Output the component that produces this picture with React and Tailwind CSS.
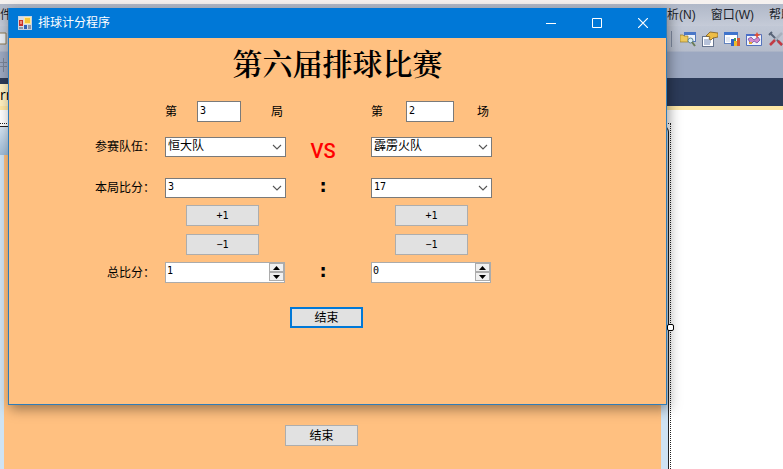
import { useState } from "react";

function Chevron() {
  return (
    <svg className="pointer-events-none absolute right-1 top-1.5 h-2 w-2.5" viewBox="0 0 10 8" fill="none" stroke="#555" strokeWidth="1.1">
      <path d="M1 2l4 4 4-4" />
    </svg>
  );
}

function Combo({ label, options, numeric }) {
  return (
    <div className="relative w-[121px]">
      <select
        aria-label={label}
        className={`block h-5 w-full appearance-none border border-[#7a7a7a] bg-white px-0.5 pb-0.5 leading-4 outline-none ${numeric ? "font-['DejaVu_Sans_Mono',monospace] text-[10px]" : "text-xs"}`}
      >
        {options.map((o) => (
          <option key={o}>{o}</option>
        ))}
      </select>
      <Chevron />
    </div>
  );
}

function SmallBox({ label, value, width }) {
  return (
    <input
      aria-label={label}
      defaultValue={value}
      className={`${width} h-[21px] border border-[#7a7a7a] bg-white px-0.5 pb-0.5 font-['DejaVu_Sans_Mono',monospace] text-[10px] outline-none`}
    />
  );
}

function Button({ children, focused, numeric, onClick }) {
  return (
    <button
      type="button"
      onClick={onClick}
      className={`h-[21px] w-[73px] bg-[#e1e1e1] leading-4 ${focused ? "border-2 border-[#0078d7]" : "border border-[#adadad]"} ${numeric ? "font-['DejaVu_Sans_Mono',monospace] text-[10px]" : "text-xs"}`}
    >
      {children}
    </button>
  );
}

function Arrow({ label, d, onClick }) {
  return (
    <button type="button" aria-label={label} onClick={onClick} className="flex flex-1 items-center justify-center border border-[#acacac] bg-[#f0f0f0]">
      <svg className="h-1 w-[7px]" viewBox="0 0 7 4">
        <path d={d} fill="#000" />
      </svg>
    </button>
  );
}

function Spinner({ label, initial }) {
  const [value, setValue] = useState(initial);
  return (
    <div className="flex h-[21px] w-[120px] border border-[#ababab] bg-white">
      <input
        aria-label={label}
        value={value}
        onChange={(e) => setValue(Number(e.target.value) || 0)}
        className="min-w-0 flex-1 px-px pb-1 font-['DejaVu_Sans_Mono',monospace] text-[10px] leading-4 outline-none"
      />
      <div className="flex h-[18px] w-[15px] flex-col">
        <Arrow label="增加" d="M0 4L3.5 0L7 4z" onClick={() => setValue(value + 1)} />
        <Arrow label="减少" d="M0 0L3.5 4L7 0z" onClick={() => setValue(value - 1)} />
      </div>
    </div>
  );
}

function Row({ label, left, middle, right, className }) {
  return (
    <div className={`grid grid-cols-[156px_122px_84px_122px] items-center ${className}`}>
      <span className="pr-2.5 text-right leading-5">{label}</span>
      {left}
      <span className="flex justify-center pr-3">{middle}</span>
      {right}
    </div>
  );
}

function Colon() {
  return <span className="pb-1 font-['DejaVu_Sans',sans-serif] text-lg font-bold leading-4">:</span>;
}

function AppIcon() {
  return (
    <svg className="h-3.5 w-3.5" viewBox="0 0 14 14">
      <rect x=".5" y=".5" width="13" height="13" fill="#d7dde6" stroke="#c6d2e2" />
      <rect x="6.500" y="1.500" width="6" height="6" fill="#f5c63b" stroke="#fbe9a0" />
      <rect x="1" y="4" width="4" height="6" fill="#c8322b" />
      <rect x="2" y="5" width="2" height="3" fill="#ee8a78" />
      <rect x="6" y="9" width="3" height="4" fill="#2f62b5" />
      <path d="M1 11h4v2H1zM10 9h3v4h-3z" fill="#8d97a8" />
    </svg>
  );
}

function ScoreWindow() {
  return (
    <section className="absolute left-2 top-2 z-10 h-[397px] w-[659px] border border-t-0 border-[#2f7cb8] bg-[#ffc080] shadow-[2px_4px_12px_rgba(0,0,0,0.4)]">
      <header className="flex h-[30px] items-center bg-[#0078d7] pl-[9px] text-white">
        <AppIcon />
        <span className="ml-1.5 text-xs">排球计分程序</span>
        <div className="ml-auto flex h-full">
          <button type="button" aria-label="最小化" className="flex w-[46px] items-center justify-center">
            <svg className="h-2.5 w-2.5" viewBox="0 0 10 10" stroke="#fff"><path d="M0 5.5h10" /></svg>
          </button>
          <button type="button" aria-label="最大化" className="flex w-[46px] items-center justify-center">
            <svg className="h-2.5 w-2.5" viewBox="0 0 10 10" fill="none" stroke="#fff"><path d="M.5.5h9v9h-9z" /></svg>
          </button>
          <button type="button" aria-label="关闭" className="flex w-[46px] items-center justify-center">
            <svg className="h-2.5 w-2.5" viewBox="0 0 10 10" fill="none" stroke="#fff" strokeWidth="1.2"><path d="M0 0l10 10M10 0L0 10" /></svg>
          </button>
        </div>
      </header>

      <h1 className="mt-1 text-center font-['Noto_Serif_CJK_SC','Noto_Sans_CJK_SC',serif] text-[30px] font-semibold leading-10">第六届排球比赛</h1>

      <Row
        className="mt-[19px] grid-rows-[21px]"
        left={
          <div className="flex items-center justify-between pr-1">
            <span>第</span>
            <SmallBox label="局" value="3" width="w-11" />
            <span className="pl-2.5">局</span>
          </div>
        }
        right={
          <div className="flex items-center justify-between pr-1">
            <span>第</span>
            <SmallBox label="场" value="2" width="w-12" />
            <span>场</span>
          </div>
        }
      />
      <Row
        className="mt-[15px] grid-rows-[20px]"
        label="参赛队伍："
        left={<Combo label="参赛队伍一" options={["恒大队", "霹雳火队"]} />}
        middle={<span className="pt-2 font-['Roboto',sans-serif] text-xl font-medium leading-5 text-[#f00]">VS</span>}
        right={<Combo label="参赛队伍二" options={["霹雳火队", "恒大队"]} />}
      />
      <Row
        className="mt-[21px] grid-rows-[20px]"
        label="本局比分："
        left={<Combo numeric label="本局比分一" options={["3", "4"]} />}
        middle={<Colon />}
        right={<Combo numeric label="本局比分二" options={["17", "18"]} />}
      />
      <Row
        className="mt-[7px]"
        left={<div className="flex flex-col gap-2 pl-[21px]"><Button numeric>+1</Button><Button numeric>−1</Button></div>}
        right={<div className="flex flex-col gap-2 pl-6"><Button numeric>+1</Button><Button numeric>−1</Button></div>}
      />
      <Row
        className="mt-[7px] grid-rows-[21px]"
        label="总比分："
        left={<Spinner label="总比分一" initial={1} />}
        middle={<Colon />}
        right={<Spinner label="总比分二" initial={0} />}
      />
      <div className="mt-6 pl-[281px]">
        <Button focused>结束</Button>
      </div>
    </section>
  );
}

function ToolIcons() {
  return (
    <div className="ml-auto flex h-full w-[116px] shrink-0 items-center gap-1.5 overflow-hidden pl-1">
      <span className="mr-0.5 h-4 w-px shrink-0 bg-[#7f8aa0]" />
      <svg className="h-4 w-4 shrink-0" viewBox="0 0 16 16">
        <rect x="4.500" y="1.500" width="11" height="9" fill="#eef3fb" stroke="#5578b8" />
        <path d="M4 1h12v3H4z" fill="#4a78c8" />
        <path d="M0 4h3l1 1h4v6H0z" fill="#edc95c" stroke="#9a7b2c" strokeWidth=".7" />
        <circle cx="10.500" cy="9.500" r="2.500" fill="#d8ecf5" stroke="#5d8797" />
        <path d="M12 11l3 4" stroke="#6b7d58" strokeWidth="2" />
      </svg>
      <svg className="h-4 w-4 shrink-0" viewBox="0 0 16 16">
        <rect x=".5" y="5.500" width="11" height="10" fill="#fff" stroke="#66758f" />
        <path d="M2 9h7M2 11h7M2 13h6" stroke="#6e86b4" />
        <path d="M4 5l4-4 8 1v4l-5 1-2 2-2-1 1-2z" fill="#eebd45" stroke="#7c5a20" strokeWidth=".8" />
      </svg>
      <svg className="h-4 w-4 shrink-0" viewBox="0 0 16 16">
        <rect x=".5" y="1.500" width="13" height="11" fill="#fff" stroke="#6283bd" />
        <path d="M0 1h14v3H0z" fill="#3f74cc" />
        <path d="M2 6h4v5H2z" fill="#e4eaf4" />
        <path d="M7 8h3v7H7z" fill="#3262c8" />
        <path d="M10 10h3v5h-3z" fill="#edbc2c" />
        <path d="M13 7h3v8h-3z" fill="#d95a35" />
        <path d="M10 7h2v3h-2z" fill="#49a15a" />
      </svg>
      <svg className="h-4 w-4 shrink-0" viewBox="0 0 16 16">
        <path d="M.5 3.500h15v11H.5z" fill="#eff2fb" stroke="#5372bd" />
        <path d="M0 3h10v2H0z" fill="#4a6fc9" />
        <path d="M2 8l3-2 3 3 4-3 2 3-3 3-3-2-3 3z" fill="#d48acb" stroke="#7255a8" strokeWidth=".8" />
        <path d="M11 1l1 2 3 1-3 1-1 3-1-3-2-1 2-1z" fill="#e44f32" />
        <path d="M3 11h3v2H3z" fill="#e2aa31" />
      </svg>
      <svg className="h-4 w-4 shrink-0" viewBox="0 0 16 16" fill="none">
        <path d="M2 2l12 12" stroke="#596579" strokeWidth="2" />
        <path d="M14 2L3 13" stroke="#a8b0bd" strokeWidth="2.500" />
        <path d="M1 4l3-3" stroke="#596579" strokeWidth="2" />
        <path d="M2 14l5-5M10 10l4 4" stroke="#c23b44" strokeWidth="2.500" />
      </svg>
    </div>
  );
}

function Ide() {
  return (
    <div className="flex h-full flex-col">
      <div className="h-1 bg-[#f5f1ef]" />
      <nav className="flex h-[22px] items-center justify-between overflow-hidden bg-linear-to-b from-[#b0b8c8] to-[#c5cbd8] text-xs text-[#1b1f2a]">
        <span>件(F)</span>
        <div className="flex w-[128px] shrink-0 gap-[15px] whitespace-nowrap">
          <span>分析(N)</span>
          <span>窗口(W)</span>
          <span>帮助(H)</span>
        </div>
      </nav>
      <div className="flex h-[26px] items-center border-b border-[#aab3c6] bg-linear-to-b from-[#c1c8d6] to-[#b5bccb]">
        <svg className="h-4 w-2" viewBox="0 0 8 16" fill="none">
          <path d="M0 2h6v11H0" fill="#e9edf3" stroke="#8c7b55" />
        </svg>
        <ToolIcons />
      </div>
      <div className="flex h-[26px] items-center bg-[#9ca8c1]">
        <svg className="h-4 w-2" viewBox="0 0 8 16" stroke="#7b8598"><path d="M0 5.500h7M0 9.500h7M3.500 1v14" /></svg>
      </div>
      <div className="flex h-7 items-end bg-[#2c3b59]">
        <span className="h-[22px] bg-[#fff0c0] pr-2 font-['Open_Sans',sans-serif] text-sm leading-[22px]">rr</span>
      </div>
      <div className="h-1 bg-[#ffe8a6]" />
      <main className="flex min-h-0 flex-1 bg-white pt-[13px]">
        <div className="relative w-[671px] border-r border-t border-dotted border-[#222] pr-px pt-0.5">
          <div className="flex h-full flex-col rounded-tr-md border-r border-t border-[#222] bg-[#cfe3f3] pr-[7px]">
            <div className="h-7 shrink-0 bg-linear-to-b from-[#d5e4f2] to-[#9fbcd8]" />
            <div className="ml-1 flex-1 bg-[#ffc080] pl-[281px] pt-[270px]">
              <Button>结束</Button>
            </div>
          </div>
          <span className="absolute -right-1 top-[200px] z-20 h-[7px] w-[7px] rounded-xs border border-black bg-white" />
        </div>
      </main>
    </div>
  );
}

export default function App() {
  return (
    <div className="relative h-screen overflow-hidden font-['Liberation_Sans','Noto_Sans_CJK_SC',sans-serif] text-xs text-black">
      <Ide />
      <ScoreWindow />
    </div>
  );
}
